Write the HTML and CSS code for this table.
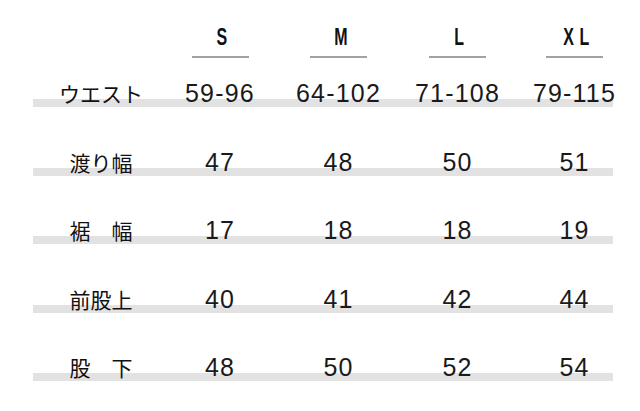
FILE: index.html
```html
<!DOCTYPE html>
<html lang="ja">
<head>
<meta charset="utf-8">
<title>サイズ表</title>
<link rel="stylesheet" href="styles.css">
</head>
<body>
<div class="table">
  <div class="head">
    <div class="hcell"></div>
    <div class="hcell"><span class="size">S</span><span class="uline"></span></div>
    <div class="hcell"><span class="size">M</span><span class="uline"></span></div>
    <div class="hcell"><span class="size">L</span><span class="uline"></span></div>
    <div class="hcell"><span class="size wide">XL</span><span class="uline"></span></div>
  </div>
  <div class="row">
    <div class="label">ウエスト</div>
    <div class="val">59-96</div>
    <div class="val">64-102</div>
    <div class="val">71-108</div>
    <div class="val">79-115</div>
  </div>
  <div class="row">
    <div class="label">渡り幅</div>
    <div class="val">47</div>
    <div class="val">48</div>
    <div class="val">50</div>
    <div class="val">51</div>
  </div>
  <div class="row">
    <div class="label">裾　幅</div>
    <div class="val">17</div>
    <div class="val">18</div>
    <div class="val">18</div>
    <div class="val">19</div>
  </div>
  <div class="row">
    <div class="label">前股上</div>
    <div class="val">40</div>
    <div class="val">41</div>
    <div class="val">42</div>
    <div class="val">44</div>
  </div>
  <div class="row">
    <div class="label">股　下</div>
    <div class="val">48</div>
    <div class="val">50</div>
    <div class="val">52</div>
    <div class="val">54</div>
  </div>
</div>
</body>
</html>
```
FILE: styles.css
```css
html, body {
  margin: 0;
  padding: 0;
  background: #ffffff;
}
body {
  width: 640px;
  height: 411px;
  overflow: hidden;
  color: #1a1a1a;
  font-family: "Liberation Sans", Arial, sans-serif;
}
.table {
  margin-left: 33px;
  width: 600px;
  display: flex;
  flex-direction: column;
  gap: 19.5px;
}
.head,
.row {
  display: grid;
  grid-template-columns: 129px 116px 121px 117px 117px;
}
.head {
  height: 58px;
  margin-bottom: -19.5px;
}
.hcell {
  display: flex;
  flex-direction: column;
  align-items: center;
  justify-content: flex-end;
}
.size {
  display: inline-block;
  font-size: 23.5px;
  font-weight: 700;
  line-height: 24px;
  transform: scaleX(0.68);
  margin-left: 4px;
  color: #111;
}
.size.wide {
  letter-spacing: 8px;
  margin-right: -8px;
  margin-left: 2px;
}
.uline {
  display: block;
  width: 57px;
  height: 2px;
  margin-top: 7px;
  background: #a2a2a2;
}
.row {
  height: 49px;
  align-items: end;
  background: linear-gradient(#e2e2e2, #e2e2e2) no-repeat left bottom / 580px 8px;
}
.label {
  padding-left: 7px;
  text-align: center;
  font-family: "Noto Sans CJK JP", sans-serif;
  font-size: 21px;
  font-weight: 400;
  line-height: 28px;
  color: #111;
}
.val {
  text-align: center;
  font-size: 25px;
  line-height: 28px;
  letter-spacing: 1.2px;
}
```
